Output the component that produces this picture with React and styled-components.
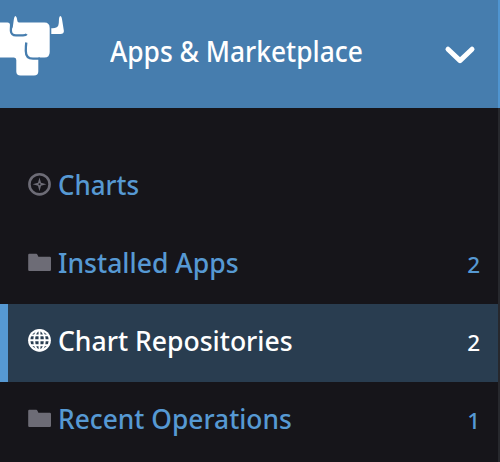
import React from 'react';
import styled, { createGlobalStyle } from 'styled-components';

const GlobalStyle = createGlobalStyle`
  * { box-sizing: border-box; }
  body { margin: 0; background: #16151a; }
`;

const Sidebar = styled.aside`
  width: 500px;
  height: 462px;
  overflow: hidden;
  background: #16151a;
  color: #5699d3;
  font-family: 'Noto Sans', sans-serif;
  font-size: 27px;
  font-weight: 500;
`;

const Header = styled.header`
  display: flex;
  align-items: flex-start;
  height: 108px;
  border-right: 2px solid #4f94d0;
  background: #467dae;
  color: #fff;
`;

const Logo = styled.svg`
  flex: 0 0 110px;
  height: 108px;
`;

const Title = styled.h1`
  margin: 33px 0 0;
  flex: 1;
  font-size: 28px;
  line-height: 36px;
  font-weight: 500;
  white-space: nowrap;
`;

const Label = styled.span`
  display: inline-block;
  white-space: nowrap;
  transform: scaleX(${(p) => p.$stretch});
  transform-origin: left center;
`;

const Chevron = styled.svg`
  width: 32px;
  height: 20px;
  margin: 45px 22px 0 0;
`;

const Navigation = styled.nav`
  display: flex;
  flex-direction: column;
  height: 354px;
  padding-top: 40px;
  border-right: 2px solid #27282d;
`;

const NavItem = styled.a`
  display: flex;
  flex-shrink: 0;
  align-items: center;
  height: 78px;
  padding: 0 18px 4px 20px;
  border-left: 8px solid ${(p) => (p.$active ? '#5699d3' : 'transparent')};
  background: ${(p) => (p.$active ? '#293d50' : 'transparent')};
  color: ${(p) => (p.$active ? '#fff' : '#5699d3')};
`;

const ItemIcon = styled.svg`
  flex: 0 0 23px;
  height: 24px;
  margin: 0 7px 2px 0;
  color: ${(p) => (p.$active ? '#fff' : '#6d6c76')};
`;

const ItemText = styled.span`
  flex: 1;
  line-height: 36px;
`;

const Count = styled.span`
  padding-top: 4px;
  font-size: 22.5px;
  line-height: 32px;
`;

const icons = {
  compass: (
    <>
      <circle cx="11.5" cy="12.3" r="10.1" fill="none" stroke="currentColor" strokeWidth="2.6" />
      <path d="M11.5 5.4 13 10.8 18.4 12.3 13 13.8 11.5 19.2 10 13.8 4.6 12.3 10 10.8Z" fill="currentColor" />
      <circle cx="11.5" cy="12.3" r="1" fill="#16151a" />
    </>
  ),
  folder: (
    <path d="M1.3 3.8H8.3Q9 3.8 9.3 4.5L10.4 6.8H21.8Q23 6.8 23 8V19.8Q23 21 21.8 21H1.3Q.2 21 .2 19.8V5Q.2 3.8 1.3 3.8Z" fill="currentColor" />
  ),
  globe: (
    <>
      <circle cx="11.5" cy="12.3" r="11.4" fill="currentColor" />
      <circle cx="11.5" cy="12.3" r="9.2" fill="#293d50" />
      <g fill="none" stroke="currentColor" strokeWidth="1.9">
        <path d="M11.5 2V22.6M1 12.3H22M3 7.4H20M3 17.2H20" />
        <ellipse cx="11.5" cy="12.3" rx="5.3" ry="10.1" />
      </g>
    </>
  ),
};

const items = [
  { name: 'Charts', icon: 'compass', stretch: 0.96 },
  { name: 'Installed Apps', icon: 'folder', count: 2, stretch: 0.984 },
  { name: 'Chart Repositories', icon: 'globe', count: 2, active: true, stretch: 0.983 },
  { name: 'Recent Operations', icon: 'folder', count: 1, stretch: 0.976 },
];

export default function App() {
  return (
    <>
      <GlobalStyle />
      <Sidebar>
        <Header>
          <Logo viewBox="0 0 110 108" aria-label="Rancher">
            <path d="M0 22.5H7.5Q10 22.5 10 25L11 31L12.8 27L13.9 19Q14.3 16 15.7 16Q17 17 17.3 20.5Q17.4 22.5 19 22.5H44.5Q49.7 22.5 49.7 28V52Q49.7 57.5 44.5 57.5H38.3V71.5Q38.3 75.6 34 75.6H20.5Q16.3 75.6 16.3 71.5V60Q16.3 57.5 14 57.5H0Z" fill="#fff" />
            <path d="M11.1 22C11.4 25 10.7 28 10.9 31Q11.2 35.4 16 35.4H23Q26 35.3 26.7 34.2" fill="none" stroke="#467dae" strokeWidth="2.3" />
            <path d="M26.3 42.5Q25.8 46 25.8 51Q25.8 58.7 33 58.7H40" fill="none" stroke="#467dae" strokeWidth="2.3" />
            <path d="M51.3 28.2Q56.7 28.7 58.3 25.5Q59 23 59 18.8Q59.2 16 60.5 16Q61.8 16.5 62.3 21L63.9 31Q63.9 34 60.5 34H51.3Z" fill="#fff" />
          </Logo>
          <Title><Label $stretch={0.941}>Apps &amp; Marketplace</Label></Title>
          <Chevron viewBox="0 0 32 20">
            <path d="M4 4.2 16 15.6 28 4.2" fill="none" stroke="#fff" strokeWidth="5" strokeLinecap="round" strokeLinejoin="round" />
          </Chevron>
        </Header>
        <Navigation>
          {items.map((item) => (
            <NavItem key={item.name} $active={item.active}>
              <ItemIcon viewBox="0 0 23 24" $active={item.active}>{icons[item.icon]}</ItemIcon>
              <ItemText><Label $stretch={item.stretch}>{item.name}</Label></ItemText>
              {item.count && <Count>{item.count}</Count>}
            </NavItem>
          ))}
        </Navigation>
      </Sidebar>
    </>
  );
}
